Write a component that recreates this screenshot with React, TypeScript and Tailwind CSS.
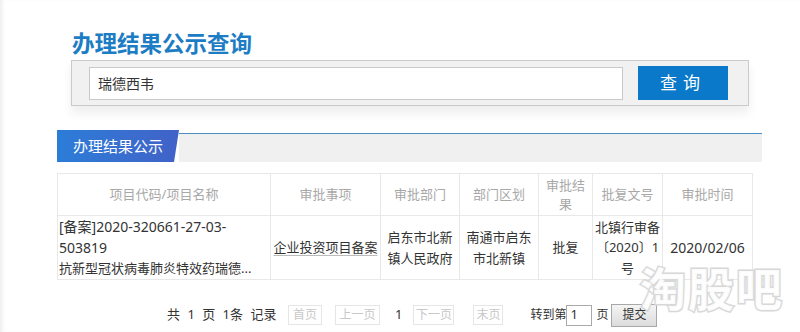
const FONT = "font-['Noto_Sans','Noto_Sans_CJK_SC',sans-serif]";

const headers = [
  { label: "项目代码/项目名称", w: "w-[213px]" },
  { label: "审批事项", w: "w-[110px]" },
  { label: "审批部门", w: "w-[79px]" },
  { label: "部门区划", w: "w-[79px]" },
  { label: "审批结\n果", w: "w-[54px]" },
  { label: "批复文号", w: "w-[70px]" },
  { label: "审批时间", w: "w-[90px]" },
];

function PageBtn({ children, className }: { children: React.ReactNode; className: string }) {
  return (
    <span
      className={`flex h-[20px] shrink-0 items-center justify-center border border-[#e6e6e6] text-[12px] text-[#c8c8c8] ${className}`}
    >
      {children}
    </span>
  );
}

export default function App() {
  return (
    <div
      className={`relative h-[332px] w-[800px] overflow-hidden bg-white ${FONT} shadow-[inset_4px_0_4px_-2px_#ececec]`}
    >
      <h1 className="ml-[72px] pt-[32px] text-[22.5px] font-bold leading-[24px] text-[#1c7cc4]">
        办理结果公示查询
      </h1>

      {/* search */}
      <div className="ml-[71px] mt-[4px] flex h-[46px] w-[678px] items-center border border-[#cacaca] bg-[#f1f1f1] shadow-[0_7px_10px_rgba(0,0,0,0.07)]">
        <div className="ml-[17px] flex h-[33px] w-[534px] items-center border border-[#c9c9c9] bg-white pl-[8px] text-[14px] text-[#333]">
          瑞德西韦
        </div>
        <button className="ml-[15px] h-[34px] w-[90px] bg-[#0a79c9] text-[17px] tracking-[6px] text-white">
          查询
        </button>
      </div>

      {/* tab bar */}
      <div className="ml-[57px] mt-[24px] flex h-[32px] w-[705px] items-end">
        <div className="relative flex h-[32px] w-[122px] items-center bg-gradient-to-r from-[#2a7dd8] to-[#4062c8] pl-[16px] text-[15px] text-white [clip-path:polygon(0_0,122px_0,117px_100%,0_100%)]">
          办理结果公示
        </div>
        <div className="h-[29px] flex-1 border-t border-[#4a8fc4] bg-[#f0f0f0]" />
      </div>

      {/* table */}
      <table className="ml-[57px] mt-[11px] w-[695px] table-fixed border-collapse">
        <thead>
          <tr className="h-[42px]">
            {headers.map((h) => (
              <th
                key={h.label}
                className={`${h.w} whitespace-pre-line border border-[#e8e8e8] text-center text-[13px] font-normal leading-[19px] text-[#a8a8a8]`}
              >
                {h.label}
              </th>
            ))}
          </tr>
        </thead>
        <tbody>
          <tr className="h-[63px] text-[13px] leading-[21px] text-[#333]">
            <td className="border border-[#e8e8e8] pl-[1px] text-left align-middle">
              <div className="text-[14px] leading-[21px]">[备案]2020-320661-27-03-</div>
              <div className="text-[14px] leading-[21px]">503819</div>
              <div className="whitespace-nowrap text-[13px] leading-[21px]">抗新型冠状病毒肺炎特效药瑞德...</div>
            </td>
            <td className="border border-[#e8e8e8] text-center">
              <span className="underline decoration-[#bbb] underline-offset-[3px]">企业投资项目备案</span>
            </td>
            <td className="border border-[#e8e8e8] text-center">
              启东市北新
              <br />
              镇人民政府
            </td>
            <td className="border border-[#e8e8e8] text-center">
              南通市启东
              <br />
              市北新镇
            </td>
            <td className="border border-[#e8e8e8] text-center">批复</td>
            <td className="border border-[#e8e8e8] text-center leading-[20.5px]">
              北镇行审备
              <br />
              〔2020〕1
              <br />号
            </td>
            <td className="border border-[#e8e8e8] text-center text-[14px]">2020/02/06</td>
          </tr>
        </tbody>
      </table>

      {/* pagination */}
      <div className="ml-[167px] mt-[24px] flex h-[22px] items-center whitespace-nowrap text-[12px] text-[#333]">
        <span className="w-[100px] shrink-0 text-[13px] [word-spacing:4px]">共 1 页 1条 记录</span>
        <PageBtn className="ml-[21px] w-[34px]">首页</PageBtn>
        <PageBtn className="ml-[13px] w-[45px]">上一页</PageBtn>
        <span className="ml-[15px] text-[13px]">1</span>
        <PageBtn className="ml-[11px] w-[41px]">下一页</PageBtn>
        <PageBtn className="ml-[19px] w-[30px]">末页</PageBtn>
        <span className="ml-[27px]">转到第</span>
        <span className="flex h-[21px] w-[26px] items-center border border-[#a9a9a9] pl-[3px] text-[13px]">1</span>
        <span className="ml-[4px]">页</span>
        <button className="ml-[3px] h-[23px] w-[46px] border border-[#a8a8a8] bg-gradient-to-b from-[#f4f4f4] to-[#dcdcdc] text-[12px] text-[#333]">
          提交
        </button>
      </div>

      {/* watermark: hollow outlined text */}
      <div className="pointer-events-none absolute left-[640px] top-[260px] text-[46px] font-bold leading-[56px] tracking-[2px] text-white/90 [-webkit-text-stroke:3px_#d8d8d8] [paint-order:stroke_fill]">
        淘股吧
      </div>
    </div>
  );
}
